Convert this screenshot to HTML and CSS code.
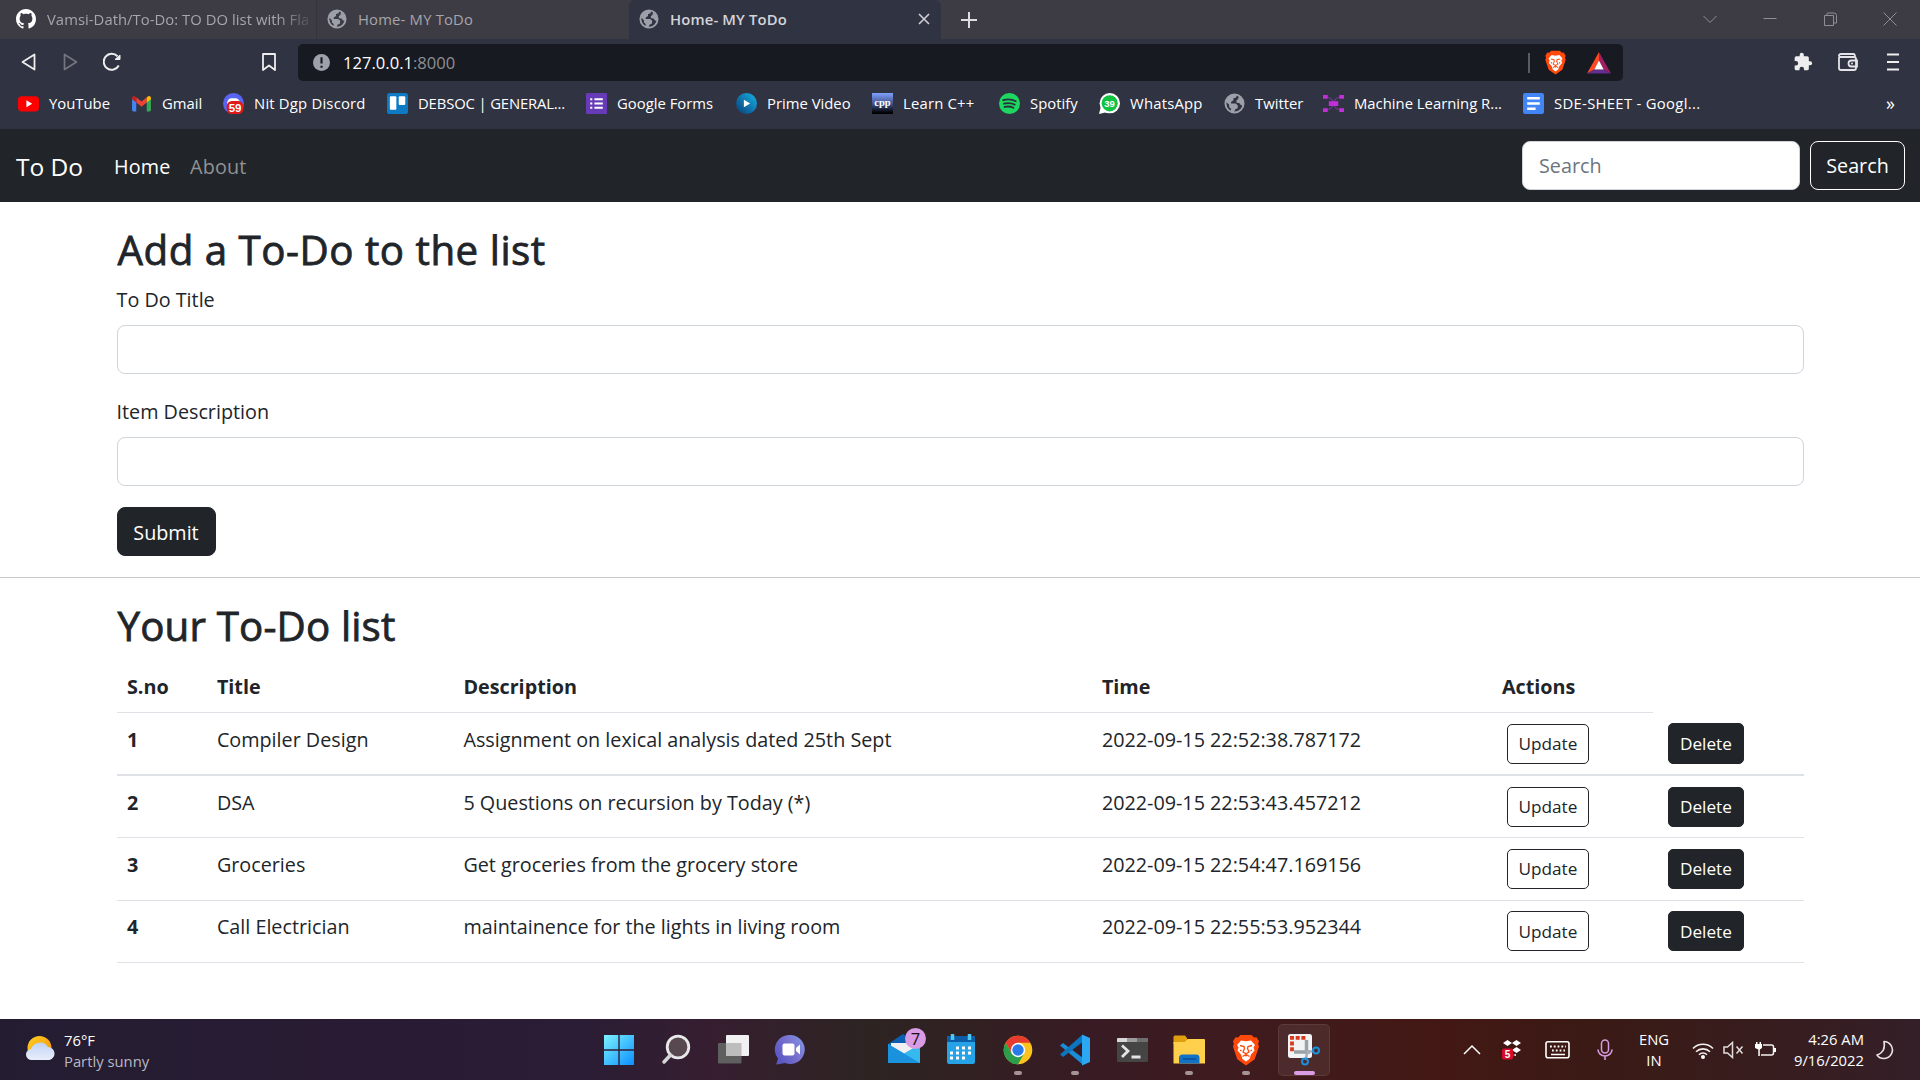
FILE: index.html
```html
<!DOCTYPE html>
<html lang="en">
<head>
<meta charset="utf-8">
<title>Home- MY ToDo</title>
<link rel="stylesheet" href="styles.css">
</head>
<body>
<svg class="defs" width="0" height="0" aria-hidden="true">
  <symbol id="globe" viewBox="0 0 20 20">
    <circle cx="10" cy="10" r="8.6" fill="none" stroke="#9da0a8" stroke-width="1.9"/>
    <path fill="#9da0a8" d="M2 8.500 3.500 4.500 8 1.500l4 .2-.3 2.500-2.700.8v2L6.700 8.500v1.500h4.500l2 1.800-.2 2.700-2.500 1.200-1 3-3-.6.200-3.100-1.700-1.500-.2-2.500zM14 3l3 2.800 1.500 4-.3 2.200-2.200-.5-1.500-2-2.500-.3-.2-2 1.700-1.500z"/>
  </symbol>
  <symbol id="lion" viewBox="0 0 28 32">
    <path fill="#ff4a0c" d="M8.500 1h11l2.500 2.600 2.500-.3 2.500 4-.8 2.500.8 3-4.300 12.500L14 31.500 5.300 25.300 1 12.800l.8-3L1 7.300l2.500-4 2.500.3z"/>
    <path fill="#fff" d="M9 6.500l5 .8 5-.8 4 4.500-1.500 2.500 1 3-3.500 4-1.500 4.500-3.500 2.500-3.500-2.500L9 20.500l-3.500-4 1-3L5 11z"/>
    <path fill="none" stroke="#ff4a0c" stroke-width="1.300" d="M8 11.500l4 1 .5 2-1.500 3.500 3 1.800 3-1.800-1.500-3.500.5-2 4-1M14 20v2.500M8 16l1.500 1M20 16l-1.500 1M10.500 22.500l3.500-2 3.500 2"/>
  </symbol>
</svg>

<header class="browser">
  <div class="tabs">
    <div class="tab tab-first">
      <svg class="i20" viewBox="0 0 16 16"><path fill="#fff" d="M8 0C3.580 0 0 3.580 0 8c0 3.540 2.290 6.530 5.470 7.590.4.070.550-.170.550-.380 0-.190-.010-.820-.010-1.490-2.010.370-2.530-.490-2.690-.940-.090-.230-.480-.940-.820-1.130-.280-.150-.680-.520-.010-.530.630-.010 1.080.580 1.230.820.720 1.210 1.870.870 2.330.660.070-.520.280-.870.510-1.070-1.780-.2-3.640-.890-3.640-3.950 0-.870.310-1.590.820-2.150-.080-.2-.360-1.020.080-2.120 0 0 .670-.210 2.200.820.640-.180 1.320-.270 2-.270s1.360.090 2 .270c1.530-1.040 2.200-.820 2.200-.820.440 1.100.160 1.920.080 2.120.510.560.820 1.270.820 2.150 0 3.070-1.870 3.750-3.650 3.950.290.250.540.730.540 1.480 0 1.070-.010 1.930-.010 2.200 0 .210.150.460.550.380A8.010 8.010 0 0 0 16 8c0-4.420-3.580-8-8-8z"/></svg>
      <span class="fade">Vamsi-Dath/To-Do: TO DO list with Fla</span>
    </div>
    <div class="tab"><svg class="i20"><use href="#globe"/></svg><span>Home- MY ToDo</span></div>
    <div class="tab active"><svg class="i20"><use href="#globe"/></svg><span>Home- MY ToDo</span>
      <svg class="close" viewBox="0 0 12 12"><path d="M1 1l10 10M11 1L1 11" stroke="#d0d0d4" stroke-width="1.600"/></svg></div>
    <svg class="plus" viewBox="0 0 16 16"><path d="M8 0v16M0 8h16" stroke="#dedee0" stroke-width="2"/></svg>
    <div class="winctl">
      <svg viewBox="0 0 14 14"><path d="M.5 4l6.500 6.500L13.500 4"/></svg>
      <svg viewBox="0 0 14 14"><path d="M.5 6.500h13"/></svg>
      <svg viewBox="0 0 14 14"><path d="M1.500 3.500h9v10h-9zM4 3.500v-2q0-.5.500-.5H11q2.500 0 2.500 2.500v7.500h-3"/></svg>
      <svg viewBox="0 0 14 14"><path d="M.5 .5l13 13M13.500 .5l-13 13"/></svg>
    </div>
  </div>

  <div class="toolbar">
    <svg class="tb" viewBox="0 0 20 20"><path d="M15.500 2.500v15L3.500 10z" fill="none" stroke="#eee" stroke-width="1.800" stroke-linejoin="round"/></svg>
    <svg class="tb" viewBox="0 0 20 20"><path d="M3.500 2.500v15L15.500 10z" fill="none" stroke="#74757e" stroke-width="1.700" stroke-linejoin="round"/></svg>
    <svg class="tb" viewBox="0 0 20 20"><path d="M14.500 4.200A8 8 0 1 0 15.800 13.500" fill="none" stroke="#eee" stroke-width="2"/><path d="M12 7.500h5V3z" fill="#eee" stroke="#eee" stroke-linejoin="round"/></svg>
    <svg class="tb bm" viewBox="0 0 20 20"><path d="M4 2h12v16l-6-4.500L4 18z" fill="none" stroke="#eee" stroke-width="1.800" stroke-linejoin="round"/></svg>
    <div class="url">
      <svg class="i16" viewBox="0 0 16 16"><circle cx="8" cy="8" r="8" fill="#9ea1a9"/><path d="M8 3v6M8 11v2" stroke="#171a21" stroke-width="2"/></svg>
      <span class="addr">127.0.0.1<b>:8000</b></span>
      <i class="bar"></i>
      <svg class="shield"><use href="#lion"/></svg>
      <svg class="bat" viewBox="0 0 24 22"><path fill="#ff4724" d="M12 0L0 21.500 7.500 17.500 12 9z"/><path fill="#9e1f63" d="M12 0l12 21.500-7.500-4L12 9z"/><path fill="#662d91" d="M0 21.500h24l-7.500-4h-9z"/><path fill="#fff" d="M12 8.500l4.700 9H7.300z"/></svg>
    </div>
    <div class="ext">
      <svg class="tb" viewBox="0 0 24 24"><path fill="#eee" d="M20.500 11H19V7a2 2 0 0 0-2-2h-4V3.500a2.500 2.500 0 0 0-5 0V5H4a2 2 0 0 0-2 2v3.800h1.500a2.700 2.700 0 0 1 0 5.400H2V20a2 2 0 0 0 2 2h3.800v-1.500a2.700 2.700 0 0 1 5.400 0V22H17a2 2 0 0 0 2-2v-4h1.500a2.500 2.500 0 0 0 0-5z"/></svg>
      <svg class="tb" viewBox="0 0 20 20"><path d="M1 5v11q0 2 2 2h13q2 0 2-2V7q0-2-2-2H3Q1 5 1 3.500T3 2h12.500q1.500 0 1.500 3M19 8.500h-5.500a3 3 0 0 0 0 6H19z" fill="none" stroke="#e4e4e8" stroke-width="1.800"/><circle cx="14" cy="11.500" r="1" fill="#e4e4e8"/></svg>
      <svg class="tb" viewBox="0 0 20 20"><path d="M4 2.500h12M4 10h12M4 17.500h12" stroke="#eee" stroke-width="2"/></svg>
    </div>
  </div>

  <nav class="bookmarks">
    <a><svg viewBox="0 0 20 20"><rect y="3" width="20" height="14.500" rx="3.500" fill="#f00"/><path d="M8 7v6.500l5.500-3.200z" fill="#fff"/></svg>YouTube</a>
    <a><svg viewBox="0 0 20 20"><path fill="#4285f4" d="M1 5l4 3v9.500H2.200Q1 17.500 1 16z"/><path fill="#34a853" d="M19 5l-4 3v9.500h2.800Q19 17.500 19 16z"/><path fill="#ea4335" d="M5 4l5 4 5-4v5l-5 4-5-4z"/><path fill="#c5221f" d="M1 5q0-2.500 2.500-2L5 4v5L1 6z"/><path fill="#fbbc04" d="M19 5q0-2.500-2.500-2L15 4v5l4-3z"/></svg>Gmail</a>
    <a class="wide"><svg viewBox="0 0 20 20"><circle cx="10" cy="10" r="10" fill="#5865f2"/><path fill="#fff" d="M4 9q1-4 4-4h4q3 0 4 4v2H4z"/><rect x="3.500" y="7.500" width="16" height="12.500" rx="5" fill="#e01919"/><text x="11.500" y="18" text-anchor="middle" class="badge">59</text></svg>Nit Dgp Discord</a>
    <a class="tight"><svg viewBox="0 0 20 20"><rect width="20" height="20" rx="2.500" fill="#0c7bc4"/><rect x="2.700" y="3" width="6.200" height="13" rx="1" fill="#fff"/><rect x="11.200" y="3" width="6.200" height="8.500" rx="1" fill="#fff"/></svg>DEBSOC | GENERAL...</a>
    <a><svg viewBox="0 0 20 20"><rect width="20" height="20" rx="1" fill="#673ab7"/><path d="M4 6h2M8 6h8M4 10h2M8 10h8M4 14h2M8 14h8" stroke="#fff" stroke-width="2"/></svg>Google Forms</a>
    <a><svg viewBox="0 0 20 20"><defs><linearGradient id="pv" x1="0" y1="1" x2="1" y2="0"><stop stop-color="#0a3a75"/><stop offset="1" stop-color="#16b5e8"/></linearGradient></defs><circle cx="10" cy="10" r="10" fill="url(#pv)"/><path d="M7.500 6.500v7L13.500 10z" fill="#fff"/></svg>Prime Video</a>
    <a class="wide"><svg viewBox="0 0 20 20"><defs><linearGradient id="cp" x2="0" y2="1"><stop stop-color="#7fa0ff"/><stop offset=".55" stop-color="#3c4c80"/><stop offset=".95" stop-color="#000"/></linearGradient></defs><rect width="20" height="20" fill="url(#cp)"/><text x="10" y="12" text-anchor="middle" class="cpp">cpp</text></svg>Learn C++</a>
    <a><svg viewBox="0 0 20 20"><circle cx="10" cy="10" r="10" fill="#1ed760"/><path d="M4 6.800q6.500-2 12 1M4.700 10.200q5.500-1.500 10.300.9M5.300 13.300q4.500-1.200 8.500.8" fill="none" stroke="#26313a" stroke-width="1.700" stroke-linecap="round"/></svg>Spotify</a>
    <a class="wide"><svg viewBox="0 0 20 20"><circle cx="10.300" cy="9.700" r="9.700" fill="#fff"/><path d="M0 20l2-8 6 6z" fill="#fff"/><circle cx="10.200" cy="9.800" r="7.700" fill="#12c243"/><text x="10" y="13.300" text-anchor="middle" class="wa">39</text></svg>WhatsApp</a>
    <a><svg><use href="#globe"/></svg>Twitter</a>
    <a><svg viewBox="0 0 20 20"><path d="M2 3.500Q9 4 10 10t8 6.500M18 3.500Q11 4 10 10t-8 6.500" fill="none" stroke="#7a3596" stroke-width="1"/><path fill="#c12fd6" d="M0 2h4.500v3.500H0zM15.500 2H20v3.500h-4.500zM0 14.500h4.500V18H0zM15.500 14.500H20V18h-4.500zM5.500 7.800h9v4.500h-9z"/></svg>Machine Learning R...</a>
    <a class="wider"><svg viewBox="0 0 20 20"><rect width="20" height="20" rx="2" fill="#4285f4"/><path d="M4 5h12M4 10h12M4 15h8" stroke="#fff" stroke-width="2.400"/></svg>SDE-SHEET - Googl...</a>
    <a class="more">»</a>
  </nav>
</header>

<nav class="navbar">
  <a class="brand">To Do</a>
  <a class="link on">Home</a>
  <a class="link">About</a>
  <form class="search"><input class="control" placeholder="Search"><button type="button" class="btn outline-light">Search</button></form>
</nav>

<main>
  <section class="container">
    <h2>Add a To-Do to the list</h2>
    <label>To Do Title</label>
    <input class="control field">
    <label>Item Description</label>
    <input class="control field">
    <button type="button" class="btn dark">Submit</button>
  </section>
  <hr>
  <section class="container">
    <h2 class="snug">Your To-Do list</h2>
    <table>
      <colgroup><col class="c1"><col class="c2"><col class="c3"><col class="c4"><col class="c5"><col class="c6"></colgroup>
      <thead><tr><th>S.no</th><th>Title</th><th>Description</th><th>Time</th><th>Actions</th></tr></thead>
      <tbody>
        <tr><th>1</th><td>Compiler Design</td><td>Assignment on lexical analysis dated 25th Sept</td><td>2022-09-15 22:52:38.787172</td><td><button class="btn sm outline">Update</button></td><td><button class="btn sm dark">Delete</button></td></tr>
        <tr><th>2</th><td>DSA</td><td>5 Questions on recursion by Today (*)</td><td>2022-09-15 22:53:43.457212</td><td><button class="btn sm outline">Update</button></td><td><button class="btn sm dark">Delete</button></td></tr>
        <tr><th>3</th><td>Groceries</td><td>Get groceries from the grocery store</td><td>2022-09-15 22:54:47.169156</td><td><button class="btn sm outline">Update</button></td><td><button class="btn sm dark">Delete</button></td></tr>
        <tr><th>4</th><td>Call Electrician</td><td>maintainence for the lights in living room</td><td>2022-09-15 22:55:53.952344</td><td><button class="btn sm outline">Update</button></td><td><button class="btn sm dark">Delete</button></td></tr>
      </tbody>
    </table>
  </section>
</main>

<footer class="taskbar">
  <div class="weather">
    <svg width="30" height="26" viewBox="0 0 30 26"><defs><linearGradient id="sun" x2="1" y2="1"><stop stop-color="#ffd21f"/><stop offset="1" stop-color="#f58a0b"/></linearGradient><linearGradient id="cl" x2="0" y2="1"><stop stop-color="#bfd3f5"/><stop offset="1" stop-color="#e9eefa"/></linearGradient></defs><circle cx="13.500" cy="13" r="12" fill="url(#sun)"/><path fill="url(#cl)" d="M6 25a5.500 5.500 0 0 1-1-11 9.500 9.500 0 0 1 17-2 6.600 6.600 0 0 1 1.500 13z"/></svg>
    <div><span>76°F</span><span class="dim">Partly sunny</span></div>
  </div>
  <div class="apps">
    <span><svg viewBox="0 0 32 32"><defs><linearGradient id="wn" x2="1" y2="1"><stop stop-color="#7df3ff"/><stop offset="1" stop-color="#0a8fff"/></linearGradient></defs><path fill="url(#wn)" d="M1 1h14.300v14.300H1zM16.700 1H31v14.300H16.700zM1 16.700h14.300V31H1zM16.700 16.700H31V31H16.700z"/></svg></span>
    <span><svg viewBox="0 0 32 32"><circle cx="18" cy="13" r="10.800" fill="#584850" stroke="#e9e9ea" stroke-width="2.800"/><path d="M10.500 21l-6.500 7" stroke="#d7d7d9" stroke-width="3.500" stroke-linecap="round"/></svg></span>
    <span><svg viewBox="0 0 32 32"><rect x="1" y="9" width="23.500" height="20.500" rx="1" fill="#5f5f60"/><rect x="9" y="1" width="23" height="21" rx="1" fill="#f1f1f1"/><path d="M9 9h15.500v13H9z" fill="#bdbdbd"/></svg></span>
    <span><svg viewBox="0 0 32 32"><defs><linearGradient id="ch" x1="0" x2="1" y1=".6" y2="0"><stop stop-color="#5b58c4"/><stop offset=".5" stop-color="#7a72cf"/><stop offset="1" stop-color="#7f9be8"/></linearGradient></defs><path fill="url(#ch)" d="M17 1a14.500 14.500 0 1 1-6 28l-8 1.500q-1 0-.5-1l1.500-5A14.500 14.500 0 0 1 17 1z"/><rect x="8.500" y="9.500" width="12" height="12" rx="2" fill="#fff"/><path d="M22 14l4-3.500v10L22 17z" fill="#fff"/></svg></span>
    <span></span>
    <span><svg viewBox="0 0 32 32"><path d="M0 10L15 0l17 10v5H0z" fill="#0a5fb0"/><path d="M3 9h26v12H3z" fill="#f0f0f2"/><path d="M0 10l16 9.500L32 10v19H0z" fill="#35b9ef"/><path d="M0 10v19h32z" fill="#1b92dd"/></svg><em>7</em></span>
    <span><svg viewBox="0 0 32 32"><rect x="2" y="2" width="28" height="28" rx="2" fill="#25a3e6"/><path d="M2 8V4q0-2 2-2h24q2 0 2 2v4z" fill="#0d5ca8"/><path d="M7.500 0v6M24.500 0v6" stroke="#4fc7f2" stroke-width="3.500"/><path d="M11 14h16M5 19h22M5 24h16" stroke="#fff" stroke-width="3" stroke-dasharray="3 3"/></svg></span>
    <span class="run"><svg viewBox="0 0 32 32"><circle cx="16" cy="16" r="14.300" fill="#fcc31e"/><path d="M3.600 8.850A14.300 14.300 0 0 1 28.400 8.850H16L9.800 19.600z" fill="#e63b2e"/><path d="M3.600 8.850A14.300 14.300 0 0 0 16 30.300L22.200 19.600H9.800z" fill="#2c9e4b"/><circle cx="16" cy="16" r="7.200" fill="#fff"/><circle cx="16" cy="16" r="5.700" fill="#2a7bea"/></svg></span>
    <span class="run"><svg viewBox="0 0 32 32"><path d="M1 11.500L4 9l20 15-1 6z" fill="#1b8dd6"/><path d="M1 20.500L4 23 25 7 23 1z" fill="#0b75bd"/><path d="M23 .5l8 3.500v24l-8 3.500z" fill="#2aa8f2"/></svg></span>
    <span><svg viewBox="0 0 32 32"><rect x="1" y="4" width="31" height="24" rx="1.500" fill="#454545"/><path d="M1 8V5q0-1 1-1h9v4z" fill="#d8d8d8"/><path d="M11 4h10v4H11z" fill="#9c9c9c"/><path d="M21 4h11v4H21z" fill="#6e6e6e"/><path d="M6 11.500l6 5.500-6 6M15.500 23h9" fill="none" stroke="#e4e4e4" stroke-width="2.800"/></svg></span>
    <span class="run"><svg viewBox="0 0 32 32"><path d="M.5 3q0-1.500 1.500-1.500h10L14 4v6H.5z" fill="#e0a00d"/><path d="M.5 8H12l2.500-3H31q1 0 1 1v23.500H.5z" fill="#ffd04b"/><path d="M6 29.500V24q0-3.500 3.500-3.500h14q3 0 3 3.500v5.500z" fill="#1272c6"/><path d="M10.500 25h12" stroke="#0b4e96" stroke-width="1.600" stroke-linecap="round"/></svg></span>
    <span class="run"><svg><use href="#lion"/></svg></span>
    <span class="run sel"><svg viewBox="0 0 32 32"><rect x="0" y="0" width="24" height="24" rx="2.500" fill="#f1f3f5"/><path d="M2 3.800H18M4 7.500v11" stroke="#d83b1c" stroke-width="3.800" stroke-dasharray="4 1.700"/><path d="M6 18h16M18.500 6v14" stroke="#9aa2a8" stroke-width="3.500"/><path d="M18 26l1-8 7-1" fill="none" stroke="#aab" stroke-width="2.500"/><circle cx="28" cy="16.500" r="3" fill="none" stroke="#1b8fdc" stroke-width="2"/><circle cx="17" cy="27.500" r="3" fill="none" stroke="#1b8fdc" stroke-width="2"/></svg></span>
  </div>
  <div class="tray">
    <svg width="18" height="18" viewBox="0 0 18 18"><path d="M1 13l8-8 8 8" fill="none" stroke="#fff" stroke-width="1.500"/></svg>
    <svg width="22" height="22" viewBox="0 0 22 22"><path fill="#fff" d="M2 4l4.500-3L11 4 6.500 7zM11 4l4.500-3L20 4l-4.500 3zM11 11l4.500-3 4.500 3-4.500 3zM12 16l3-1v2z"/><rect x="1" y="9.500" width="11" height="11" rx="2" fill="#d9092b"/><text x="6.500" y="18.500" text-anchor="middle" class="five">5</text></svg>
    <svg width="26" height="20" viewBox="0 0 26 20"><rect x="1" y="1.800" width="23" height="16" rx="2" fill="none" stroke="#fff" stroke-width="1.600"/><path d="M5 6.500h16M7 10.500h13" stroke="#fff" stroke-width="1.800" stroke-dasharray="1.800 2"/><path d="M6 14.500h14" stroke="#fff" stroke-width="1.500"/></svg>
    <svg width="16" height="22" viewBox="0 0 16 22"><rect x="4.500" y="1" width="7" height="13" rx="3.500" fill="none" stroke="#d69be0" stroke-width="1.500"/><path d="M1 10.500a7 6.500 0 0 0 14 0M8 17v4" fill="none" stroke="#d69be0" stroke-width="1.600"/></svg>
    <div class="two mid"><span>ENG</span><span>IN</span></div>
    <svg width="22" height="20" viewBox="0 0 22 20"><path d="M1 8.500a14 14 0 0 1 20 0M4 11.700a10 10 0 0 1 14 0M7 14.700a5.700 5.700 0 0 1 8 0" fill="none" stroke="#f4f0f0" stroke-width="1.600"/><circle cx="11" cy="17" r="2" fill="#fff"/></svg>
    <svg width="21" height="18" viewBox="0 0 21 18"><path d="M1 6h3.500l5-4.500v15l-5-4.500H1zM13.500 5.500l6 7M19.500 5.500l-6 7" fill="none" stroke="#e4dddd" stroke-width="1.500"/></svg>
    <svg width="23" height="18" viewBox="0 0 23 18"><path d="M9 4h8.500q2 0 2 2v6q0 2-2 2H7" fill="none" stroke="#f4f0f0" stroke-width="1.500"/><path fill="#fff" d="M2 1h1.500v2h2V1H7v2h1v4L5.800 8.500V15H4.300V8.500L1 7V3h1zM20 7h2v4h-2z"/></svg>
    <div class="two end"><span>4:26 AM</span><span>9/16/2022</span></div>
    <svg width="20" height="20" viewBox="0 0 20 20"><path d="M9 1.500a8.500 8.500 0 1 1-7 13.500q9-3 7-13.500z" fill="none" stroke="#e9e2e2" stroke-width="1.600" stroke-linejoin="round"/></svg>
  </div>
</footer>
</body>
</html>
```

FILE: styles.css
```css
* { box-sizing: border-box; }
html { font-size: 20.8px; }
body {
  margin: 0; width: 1920px; height: 1080px; overflow: hidden;
  display: flex; flex-direction: column;
  font: 400 19.75px/31.2px "Open Sans", "Noto Sans", sans-serif;
  color: #212529; background: #fff;
}
.defs { position: absolute; }
svg { flex: none; display: block; }
input, button { font: inherit; color: inherit; margin: 0; }

/* browser chrome */
.browser { height: 129px; background: #303342; color: #fff; font-size: 14.8px; line-height: 20px; flex: none; }
.tabs { height: 39px; background: #3d3c44; display: flex; align-items: center; }
.tab { width: 312px; height: 39px; padding: 0 0 1px 10px; display: flex; align-items: center; gap: 11px; color: #a5a5ab; white-space: nowrap; letter-spacing: .2px; }
.tab-first { width: 317px; padding-left: 16px; border-right: 1px solid #35343b; letter-spacing: .05px; }
.fade { width: 269px; mask-image: linear-gradient(90deg, #000 230px, transparent 269px); }
.i20 { width: 20px; height: 20px; }
.i16 { width: 17px; height: 17px; }
.active { background: #303342; border-radius: 6px 6px 0 0; color: #d4d4d8; font-weight: 600; font-size: 14.8px; letter-spacing: .15px; }
.tab.active { padding-right: 11px; }
.close { width: 12px; height: 12px; margin-left: auto; }
.plus { width: 16px; height: 16px; margin-left: 20px; }
.winctl { margin-left: auto; display: flex; gap: 46px; padding: 0 23px 2px 0; }
.winctl svg { width: 14px; height: 14px; fill: none; stroke: #8f8e94; }

.toolbar { height: 46px; display: flex; align-items: center; padding: 0 17px 0 19px; }
.tb { width: 20px; height: 20px; }
.toolbar > .tb { margin-right: 22px; }
.toolbar > .bm { margin: 0 19px 0 114px; }
.url { width: 1325px; height: 37px; margin-top: 1px; background: #171a21; border-radius: 5px; display: flex; align-items: center; padding: 0 12px 0 15px; font-size: 16.6px; }
.addr { margin-left: 13px; }
.addr b { font-weight: 400; color: #8d8f95; }
.bar { width: 2px; height: 20px; background: #5a5c63; margin: 0 13px 0 auto; }
.shield { width: 25px; height: 25px; }
.bat { width: 24px; height: 22px; margin-left: 19px; }
.ext { margin-left: auto; display: flex; gap: 25px; }

.bookmarks { height: 38px; display: grid; align-items: center; padding: 0 0 2px 18px; grid-template-columns: 113px 92px 164px 199px 150px 136px 127px 100px 125px 99px 200px 363px auto; white-space: nowrap; }
.bookmarks a { display: flex; align-items: center; gap: 10px; font-size: 14.85px; }
.bookmarks .tight { letter-spacing: -.15px; }
.bookmarks .wide { letter-spacing: .2px; }
.bookmarks .wider { letter-spacing: .3px; }
.bookmarks .more { font-size: 18px; }
.bookmarks svg { width: 21px; height: 21px; }
.badge { font: 700 11px "Liberation Sans", sans-serif; fill: #fff; letter-spacing: 0; }
.wa { font: 700 9px "Liberation Sans", sans-serif; fill: #fff; letter-spacing: 0; }
.cpp { font: 700 10px "Liberation Serif", serif; fill: #fff; letter-spacing: 0; }

/* page navigation */
.navbar { flex: none; height: 73px; background: #212529; color: #fff; display: flex; align-items: center; padding: 0 15px 0 16px; }
.brand { font-size: 24.5px; width: 98px; padding-top: 2px; }
.link { color: #919294; width: 76px; padding-top: 2px; letter-spacing: .2px; }
.link.on { color: #fff; }
.search { margin-left: auto; display: flex; gap: 10px; }
.control { height: 49.4px; border: 1px solid #ced4da; border-radius: 8px; background: #fff; padding: 0 16px; }
.control::placeholder { color: #6c757d; opacity: 1; }
.search .control { width: 278px; padding-top: 1px; }
.btn { height: 49.4px; border: 1px solid #212529; border-radius: 8px; padding: 1px 0 0; width: 99px; text-align: center; }
.outline-light { width: 95px; border-color: #fff; background: none; color: #fff; }
.dark { background: #212529; color: #fff; }
.outline { background: #fff; }
.sm { font-size: 17.2px; line-height: 27px; height: 40.3px; border-radius: 5px; display: block; padding: 0; }
.sm.outline { width: 82px; margin-left: 5px; }
.sm.dark { width: 76px; margin-left: 5px; }

/* page content */
main { flex: 1; }
.container { width: 1687px; margin: 20.8px auto; }
h2 { font-weight: 400; -webkit-text-stroke: .8px #212529; font-size: 40.3px; letter-spacing: .5px; line-height: 49.9px; margin: 0 0 8.4px; padding: 2px 0 0 1px; }
h2.snug { letter-spacing: .15px; }
label { display: block; padding-top: 1px; margin-bottom: 9.4px; }
.field { display: block; width: 100%; margin-bottom: 21px; }
hr { border: 0; border-top: 1px solid #c8c9ca; margin: 20.8px 0; }
table { width: 1687px; margin-top: 9.4px; table-layout: fixed; border-collapse: collapse; text-align: left; }
.c1 { width: 90px; } .c2 { width: 246.5px; } .c3 { width: 638.5px; } .c4 { width: 400px; } .c5 { width: 161px; } .c6 { width: 151px; }
th, td { padding: 10.4px; border-bottom: 1px solid #dee2e6; vertical-align: top; white-space: nowrap; }
tbody tr { height: 62.4px; }
tbody th, tbody td { padding-bottom: 10px; }
tbody tr:first-child > * { border-bottom-width: 2px; }

/* taskbar */
.taskbar { flex: none; height: 61px; display: flex; color: #fff; font-size: 14.8px; line-height: 21px;
  background: linear-gradient(90deg, #241d32 0, #291b33 400px, #2a1d35 580px, #361e30 710px, #2d2422 870px, #312122 960px, #381b24 1090px, #3f1b1e 1250px, #431814 1440px, #3a1a15 1600px, #371d1f 1780px, #341f28 1920px); }
.weather { width: 590px; padding: 2px 0 0 26px; display: flex; align-items: center; gap: 8px; }
.weather svg { margin-bottom: 5px; }
.weather span, .two span { display: block; }
.dim { color: #bcb8c2; }
.apps { display: flex; align-items: center; }
.apps span { width: 57px; height: 52px; display: flex; align-items: center; justify-content: center; position: relative; }
.apps svg { width: 32px; height: 32px; }
.apps em { position: absolute; left: 30px; top: 4px; width: 21px; height: 21px; border-radius: 50%; background: #d99be2; color: #1a1018; font: 16.5px/21px "Open Sans", sans-serif; text-align: center; }
.run::after { content: ""; position: absolute; bottom: 1px; left: 25px; width: 8px; height: 4px; border-radius: 2px; background: #a59396; }
.apps .sel { background: rgba(255,255,255,.07); border: 1px solid rgba(255,255,255,.08); border-radius: 5px; width: 52px; margin-left: 4px; }
.sel::after { width: 21px; left: 15px; bottom: 0; background: #da9de6; }
.tray { margin-left: auto; display: grid; grid-template-columns: 40px 39px 54px 39px 60px 38px 23px 40px 79px 41px; padding-right: 15px; align-items: center; justify-items: center; white-space: nowrap; }
.two.mid { text-align: center; }
.two.end { text-align: right; justify-self: end; }
.five { font: 700 10px "Liberation Sans", sans-serif; fill: #fff; }
```
